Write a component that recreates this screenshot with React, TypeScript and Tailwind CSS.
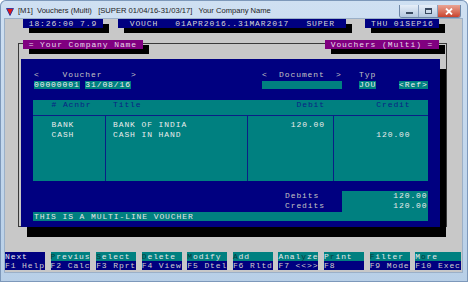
import React from 'react';

const mono = "font-['Liberation_Mono','DejaVu_Sans_Mono',monospace] text-[8px] tracking-[0.9px] whitespace-pre";

const topKeys: { label: string; hot: number; blue?: boolean }[] = [
  { label: 'Next', hot: -1, blue: true },
  { label: 'Previus', hot: 0 },
  { label: 'Select', hot: 0 },
  { label: 'Delete', hot: 0 },
  { label: 'Modify', hot: 0 },
  { label: 'Add', hot: 0 },
  { label: 'Analyze', hot: 4 },
  { label: 'Print', hot: 1 },
  { label: 'Filter', hot: 0 },
  { label: 'More', hot: 1 },
];

const bottomKeys = ['F1 Help', 'F2 Calc', 'F3 Rprt', 'F4 View', 'F5 Dtel', 'F6 Rltd', 'F7 <<>>', 'F8', 'F9 Mode', 'F10 Exec'];

function TopKey({ label, hot, blue, last }: { label: string; hot: number; blue?: boolean; last: boolean }) {
  const before = hot < 0 ? label : label.slice(0, hot);
  const key = hot < 0 ? '' : label[hot];
  const after = hot < 0 ? '' : label.slice(hot + 1);
  return (
    <div
      className={`h-[9.1px] leading-[9.1px] ${last ? 'w-[45.6px]' : 'w-[39.9px]'} ${
        blue ? 'bg-[#000080] text-[#f0f0f0]' : 'bg-[#008080] text-[#e8e8e8]'
      }`}
    >
      {before}
      {key && <span className="text-[#0a3c3c]">{key}</span>}
      {after}
    </div>
  );
}

export default function App() {
  return (
    <div className="w-[474px] h-[285px] bg-white">
      {/* window */}
      <div className="w-[468px] h-[282px] rounded-t-[6px] bg-gradient-to-b from-[#cfe0f2] to-[#b8cfe7] shadow-[inset_0_0_0_1px_#7d98ba] flex flex-col">
        {/* title bar */}
        <div className="h-[19px] flex items-start">
          <svg width="8" height="8" viewBox="0 0 8 8" className="ml-[6px] mt-[8px]">
            <polygon points="0.5,0.5 7.5,0.5 4,7.5" fill="#e01818" stroke="#1a2a9a" strokeWidth="0.8" />
          </svg>
          <span className="ml-[4px] mt-[6px] font-['Liberation_Sans',Arial,sans-serif] text-[7.6px] leading-[10px] text-[#1c1c1c] whitespace-pre">
            {'[M1]  Vouchers (Multi)   [SUPER 01/04/16-31/03/17]   Your Company Name'}
          </span>
          <div className="ml-auto mr-[7px] mt-[5px] flex h-[13px] rounded-b-[3px] overflow-hidden border border-[#6d86a6] border-t-0">
            <div className="w-[19px] h-full bg-gradient-to-b from-[#e6eef8] to-[#b5c8df] border-r border-[#8aa0bd] flex items-center justify-center">
              <div className="w-[7px] h-[2px] mt-[3px] bg-[#3a4a60]" />
            </div>
            <div className="w-[19px] h-full bg-gradient-to-b from-[#e6eef8] to-[#b5c8df] border-r border-[#8aa0bd] flex items-center justify-center">
              <div className="w-[7px] h-[6px] border border-[#3a4a60] border-t-2" />
            </div>
            <div className="w-[22px] h-full bg-gradient-to-b from-[#e9a494] to-[#c8422e] flex items-center justify-center">
              <svg width="8" height="7" viewBox="0 0 8 7">
                <path d="M1 0.5 L7 6.5 M7 0.5 L1 6.5" stroke="#ffffff" strokeWidth="1.8" />
              </svg>
            </div>
          </div>
        </div>

        {/* console client area */}
        <div className={`ml-[5px] w-[457px] h-[253px] bg-[#c8c8c8] shadow-[0_0_0_1px_#9bb0c8] flex flex-col ${mono}`}>
          {/* status line */}
          <div className="flex h-[9.1px] leading-[9.1px] text-[#d6d6d6]">
            <div className="ml-[18px] w-[79.8px] bg-[#000080] shadow-[6px_5px_0_#000]">{' 18:26:00 7.9 '}</div>
            <div className="ml-[15.5px] w-[228px] bg-[#000080] shadow-[6px_5px_0_#000]">
              {'  VOUCH   01APR2016..31MAR2017   SUPER  '}
            </div>
            <div className="ml-[19px] w-[74.1px] bg-[#000080] shadow-[6px_5px_0_#000]">{' THU 01SEP16 '}</div>
          </div>

          {/* frame */}
          <div className="ml-[13px] mt-[15px] w-[429px] h-[184px] border border-[#3a3a3a]">
            <div className="-mt-[4px] ml-[4px] mr-[7px] flex justify-between h-[9.1px] leading-[9.1px] text-[#e8d8e8]">
              <div className="w-[119.7px] bg-[#800080] shadow-[6px_5px_0_#000]">{' = Your Company Name '}</div>
              <div className="w-[114px] bg-[#800080] shadow-[6px_5px_0_#000]">{' Vouchers (Multi) = '}</div>
            </div>

            {/* voucher panel */}
            <div className="ml-[2px] mt-[10px] w-[419px] h-[168px] bg-[#000080] shadow-[6px_10px_0_#000] pl-[12px] pt-[11px] flex flex-col">
              <div className="flex text-[#c4c4c4]">
                <div className="ml-[1px] w-[228px] flex flex-col">
                  <div className="h-[10px] leading-[10px]">{'<    Voucher     >'}</div>
                  <div className="mt-[1px] flex gap-[5.7px] h-[8px] leading-[8px] text-[#f0f0f0]">
                    <span className="bg-[#008080]">00000001</span>
                    <span className="bg-[#008080]">31/08/16</span>
                  </div>
                </div>
                <div className="w-[97px] flex flex-col">
                  <div className="h-[10px] leading-[10px]">{'<  Document  >'}</div>
                  <div className="mt-[1px] w-[79.8px] h-[8px] bg-[#008080]" />
                </div>
                <div className="flex flex-col">
                  <div className="h-[10px] leading-[10px]">Typ</div>
                  <div className="mt-[1px] flex h-[8px] leading-[8px] text-[#f0f0f0]">
                    <span className="bg-[#008080]">JOU</span>
                    <span className="ml-[23px] bg-[#008080]">{'<Ref>'}</span>
                  </div>
                </div>
              </div>

              {/* lines table */}
              <div className="mt-[10.5px] w-[395px] h-[81.5px] bg-[#008080] flex flex-col">
                <div className="grid grid-cols-[72px_142px_86px_95px] h-[15.5px] pt-[0.5px] leading-[10px] text-[#0a1f86]">
                  <div className="pl-[18.5px]"># Acnbr</div>
                  <div className="pl-[8px]">Title</div>
                  <div className="text-right pr-[8px]">Debit</div>
                  <div className="text-right pr-[17.5px]">Credit</div>
                </div>
                <div className="flex-1 border-t border-[#0a1f86] grid grid-cols-[72px_142px_86px_95px] leading-[10px] text-[#ececec]">
                  <div className="pl-[18.5px] pt-[4px]">
                    <div>BANK</div>
                    <div>CASH</div>
                  </div>
                  <div className="border-l border-[#0a1f86] pl-[7px] pt-[4px]">
                    <div>BANK OF INDIA</div>
                    <div>CASH IN HAND</div>
                  </div>
                  <div className="border-l border-[#0a1f86] text-right pr-[8px] pt-[4px]">
                    <div>120.00</div>
                  </div>
                  <div className="border-l border-[#0a1f86] text-right pr-[17.5px] pt-[4px]">
                    <div>&nbsp;</div>
                    <div>120.00</div>
                  </div>
                </div>
              </div>

              {/* totals */}
              <div className="mt-[10px] flex leading-[10px]">
                <div className="ml-[252px] w-[57px] text-[#c4c4c4]">
                  <div>Debits</div>
                  <div>Credits</div>
                </div>
                <div className="w-[86px] h-[20.5px] bg-[#008080] text-right pr-[0.5px] text-[#ececec]">
                  <div>120.00</div>
                  <div>120.00</div>
                </div>
              </div>
              <div className="w-[395px] h-[9.5px] leading-[9.5px] bg-[#008080] pl-[1px] text-[#e6e6e6]">
                THIS IS A MULTI-LINE VOUCHER
              </div>
            </div>
          </div>

          {/* function keys */}
          <div className="mt-[25px] flex gap-[5.7px]">
            {topKeys.map((k, i) => (
              <TopKey key={k.label} label={k.label} hot={k.hot} blue={k.blue} last={i === topKeys.length - 1} />
            ))}
          </div>
          <div className="flex gap-[5.7px] text-[#cfcfcf]">
            {bottomKeys.map((k, i) => (
              <div
                key={k}
                className={`h-[9.1px] leading-[9.1px] bg-[#000080] ${i === bottomKeys.length - 1 ? 'w-[45.6px]' : 'w-[39.9px]'}`}
              >
                {k}
              </div>
            ))}
          </div>
        </div>
      </div>
    </div>
  );
}
